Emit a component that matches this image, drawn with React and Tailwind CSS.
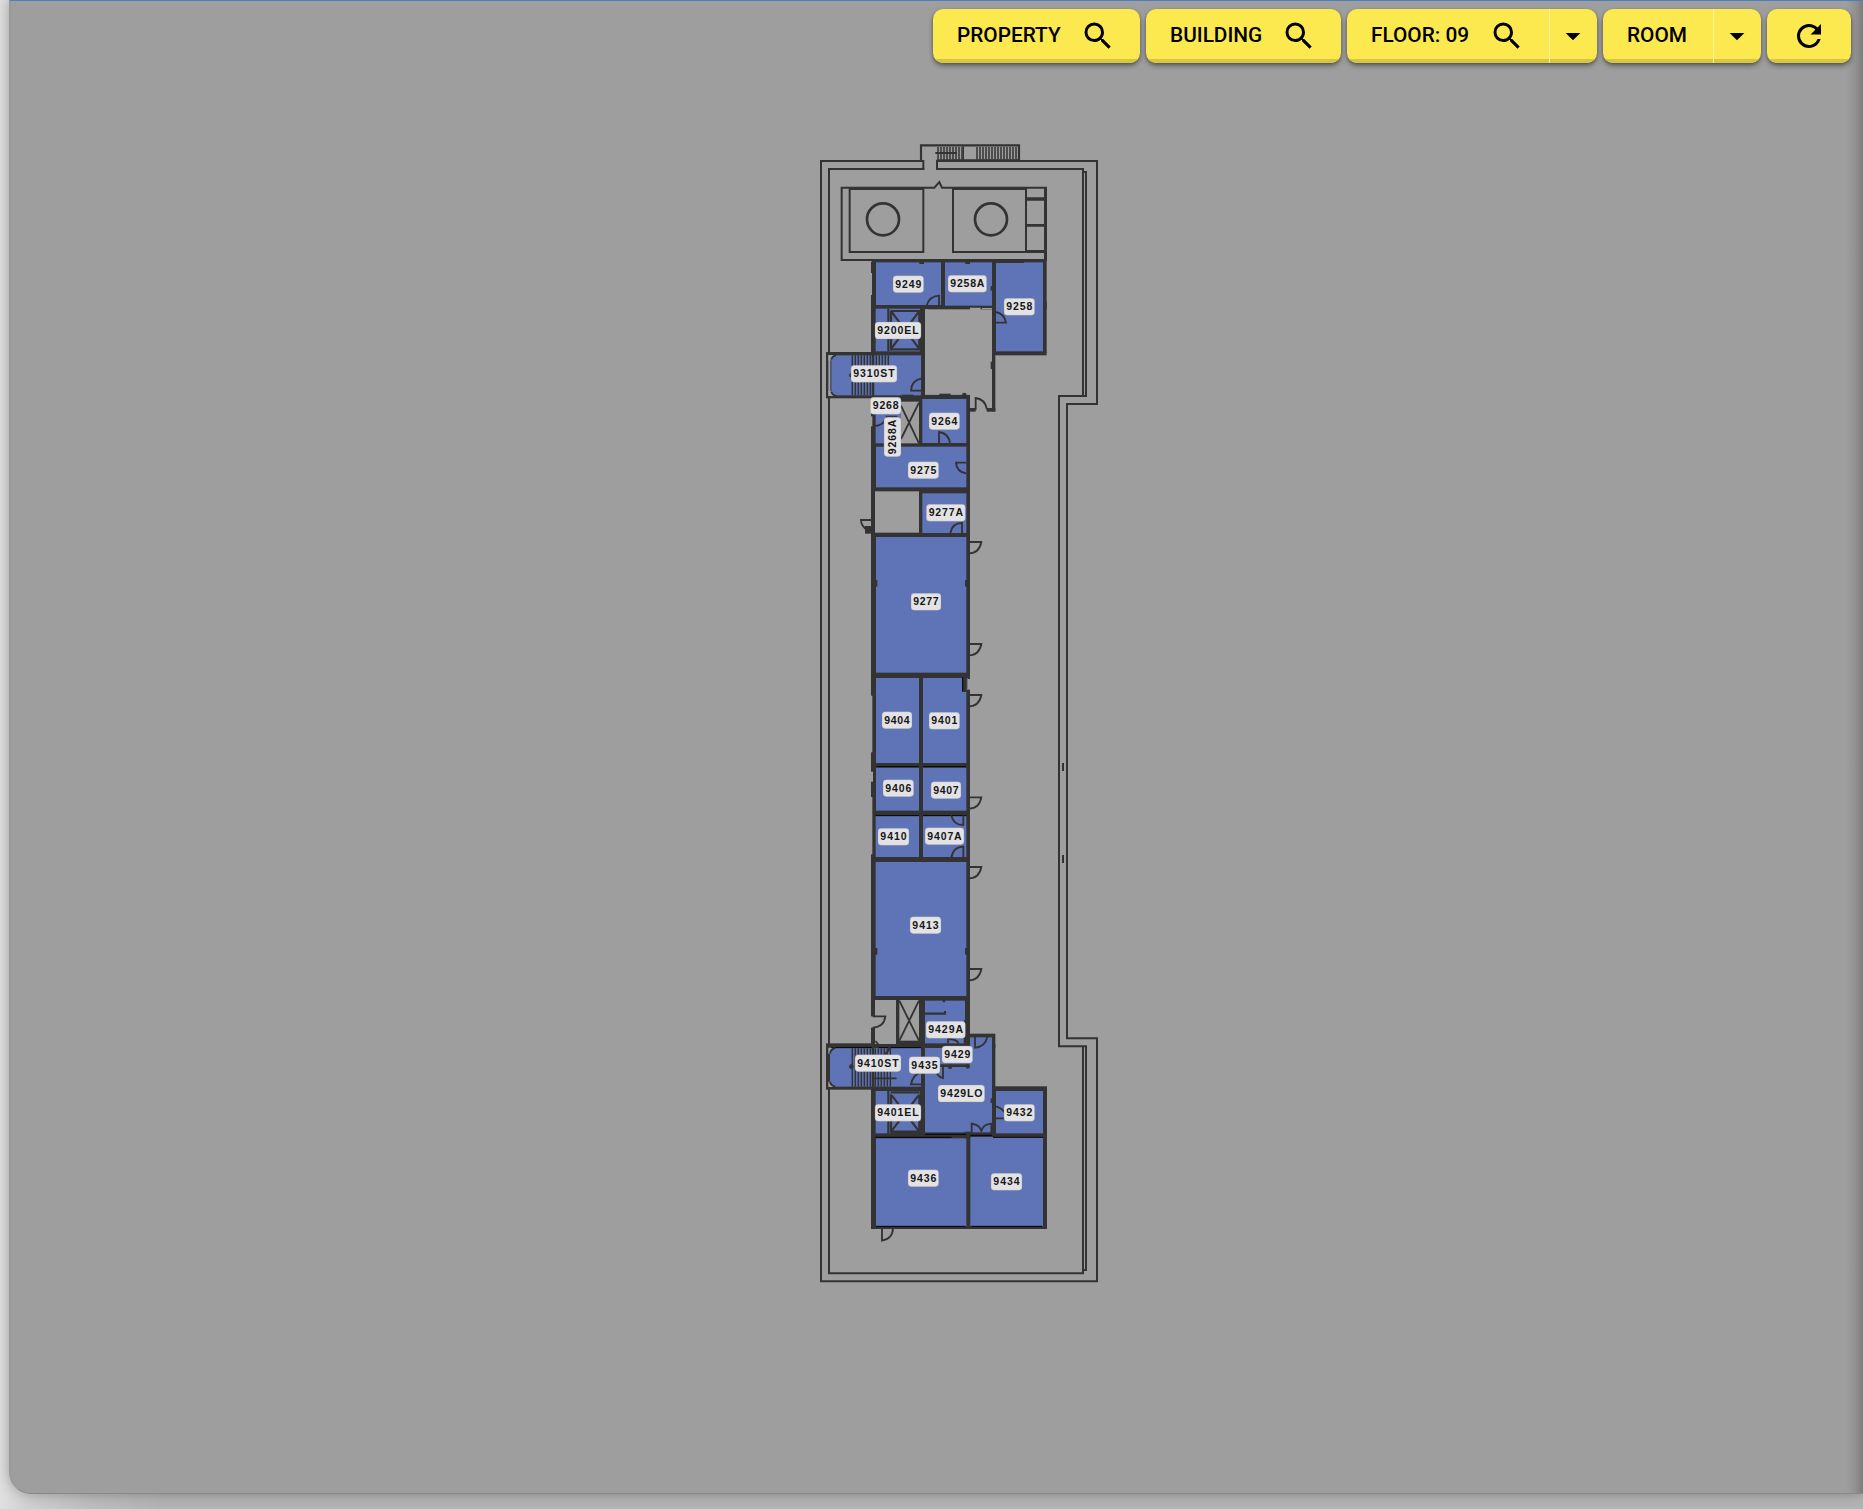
import React from "react";

const INK = "#333333";
const ROOM = "#5f74b6";
const VOID = "#9e9e9e";

const MAGNIFY =
  "M9.5,3A6.5,6.5 0 0,1 16,9.5C16,11.11 15.41,12.59 14.44,13.73L14.71,14H15.5L20.5,19L19,20.5L14,15.5V14.71L13.73,14.44C12.59,15.41 11.11,16 9.5,16A6.5,6.5 0 0,1 3,9.5A6.5,6.5 0 0,1 9.5,3M9.5,5C7,5 5,7 5,9.5C5,12 7,14 9.5,14C12,14 14,12 14,9.5C14,7 12,5 9.5,5Z";
const REFRESH =
  "M17.65,6.35C16.2,4.9 14.21,4 12,4A8,8 0 0,0 4,12A8,8 0 0,0 12,20C15.73,20 18.84,17.45 19.73,14H17.65C16.83,16.33 14.61,18 12,18A6,6 0 0,1 6,12A6,6 0 0,1 12,6C13.66,6 15.14,6.69 16.22,7.78L13,11H20V4L17.65,6.35Z";
const CARET = "M7.1,10L12,14.9L16.9,10H7.1Z";

function Icon({ d }) {
  return (
    <svg viewBox="0 0 24 24" className="size-9 shrink-0 fill-black">
      <path d={d} />
    </svg>
  );
}

// Plan units are thirds of a pixel. Boxes are [x1, y1, x2, y2].
const walls = [
  [186, 375, 710, 523],
  [183, 380, 190, 414],
  [183, 480, 190, 523],
  [546, 500, 556, 829],
  [546, 500, 710, 661],
  [183, 500, 345, 663],
  [48, 651, 342, 790],
  [333, 650, 345, 790],
  [183, 779, 480, 2740],
  [48, 2725, 345, 2864],
  [183, 2727, 556, 3010],
  [470, 2696, 556, 2740],
  [546, 2854, 711, 3010],
  [183, 2856, 711, 3282],
  [480, 819, 497, 830],
  [530, 819, 556, 830],
];

const rooms = [
  [198, 382, 393, 510],
  [405, 382, 546, 512],
  [558, 382, 699, 649],
  [197, 521, 330, 649],
  [64, 661, 333, 781],
  [197, 795, 273, 925],
  [337, 792, 469, 924],
  [198, 935, 469, 1057],
  [337, 1075, 469, 1194],
  [198, 1206, 469, 1613],
  [198, 1629, 327, 1884],
  [339, 1629, 469, 1884],
  [198, 1898, 327, 2027],
  [339, 1898, 469, 2027],
  [197, 2043, 327, 2166],
  [339, 2043, 469, 2166],
  [197, 2181, 469, 2583],
  [345, 2597, 465, 2725],
  [60, 2739, 333, 2855],
  [345, 2739, 546, 2992],
  [480, 2707, 546, 2750],
  [197, 2868, 330, 2995],
  [558, 2868, 699, 2995],
  [198, 3010, 469, 3273],
  [481, 3006, 699, 3273],
];

const voids = [
  [345, 525, 546, 779],
  [273, 800, 327, 925],
  [195, 1069, 327, 1193],
  [195, 2595, 258, 2727],
  [268, 2595, 327, 2717],
];

const labels = [
  ["9249", 249, 422, 92],
  ["9258A", 414, 421, 116],
  ["9258", 582, 490, 92],
  ["9200EL", 195, 561, 138],
  ["9310ST", 123, 691, 138],
  ["9268", 181, 787, 92],
  ["9264", 357, 833, 92],
  ["9275", 294, 980, 92],
  ["9277A", 349, 1108, 117],
  ["9277", 303, 1375, 90],
  ["9404", 216, 1730, 90],
  ["9401", 357, 1732, 92],
  ["9406", 219, 1934, 92],
  ["9407", 363, 1940, 90],
  ["9410", 204, 2080, 93],
  ["9407A", 345, 2078, 117],
  ["9413", 300, 2345, 93],
  ["9429A", 348, 2659, 118],
  ["9429", 396, 2733, 92],
  ["9435", 297, 2765, 93],
  ["9410ST", 135, 2759, 138],
  ["9429LO", 384, 2850, 140],
  ["9401EL", 195, 2908, 138],
  ["9432", 582, 2908, 92],
  ["9436", 294, 3104, 92],
  ["9434", 543, 3115, 93],
];

function Label({ text, x, y, w }) {
  return (
    <g>
      <rect x={x} y={y} width={w} height={51} rx={10} fill="#e3e3e5" stroke="#8d8d93" strokeWidth={1} />
      <text
        x={x + w / 2}
        y={y + 36}
        textAnchor="middle"
        textLength={w - 14}
        fontFamily="'Liberation Sans', Arial, sans-serif"
        fontWeight="700"
        fontSize="31.5"
        fill="#161616"
      >
        {text}
      </text>
    </g>
  );
}

function boxes(list, fill) {
  return list.map(([a, b, c, d]) => (
    <rect key={`${a}-${b}-${c}`} x={a} y={b} width={c - a} height={d - b} fill={fill} />
  ));
}

const treads = (from, to, y1, y2, step = 9) => {
  let d = "";
  for (let x = from; x <= to; x += step) d += `M${x} ${y1}V${y2}`;
  return d;
};

const sideDoors = [1221, 1527, 1680, 1987, 2196, 2502];

function FloorPlan() {
  return (
    <svg viewBox="0 0 900 3465" className="h-[1155px] w-[300px] shrink-0">
      <g fill="none" stroke={INK} strokeWidth={6}>
        <path d="M340 105V78H33V3439H861V2710H771V807H861V78H381V105" />
        <path d="M343 102H57V3415H819V2734M819 783V102H378" />
        <path d="M819 111H828V783H747V2734H828V3405H819" />
        <path d="M333 78V31H627V76" strokeWidth={6.5} />
        <path d="M460 30V75M627 75H380" strokeWidth={4} />
        <path d={treads(384, 462, 36, 74)} strokeWidth={4.5} />
        <path d={treads(501, 622, 36, 74)} strokeWidth={4.5} />
        <path d="M376 54H440" strokeWidth={6} />
        <path d="M95 158H373L388 141L396 158H708V375H95Z" />
        <path d="M119 162H340V351H119ZM708 351H429V162H648V351" />
        <path d="M648 192H708" strokeWidth={10} />
        <path d="M648 271H708" strokeWidth={8} />
        <path d="M648 349H708" strokeWidth={8} />
        <path d="M706 158V375" strokeWidth={8} />
        <circle cx="219" cy="253" r="48" strokeWidth={8} />
        <circle cx="543" cy="253" r="48" strokeWidth={8} />
        <path d="M759 1884V1908M759 2160V2184" />
      </g>

      {boxes(walls, INK)}
      {boxes(voids, VOID)}
      {boxes(rooms, ROOM)}

      {/* openings and uneven wall faces */}
      <g fill={VOID}>
        <rect x="345" y="523" width="10" height="5" />
        <path d="M480 518H512V526H480ZM516 519H546V522H516Z" />
        <rect x="183" y="1682" width="4" height="170" />
        <rect x="183" y="1910" width="6" height="30" />
        <rect x="183" y="1986" width="4" height="172" />
        <rect x="183" y="844" width="4" height="30" />
        <rect x="183" y="2644" width="12" height="34" />
        <rect x="55" y="661" width="6" height="122" />
        <path d="M55 660H74Q64 664 64 676H55ZM55 783H74Q64 779 64 768H55Z" />
        <path d="M55 2738H74Q60 2742 60 2756H55ZM55 2856H74Q60 2852 60 2840H55Z" />
        <rect x="470" y="1630" width="3" height="35" />
        <rect x="474" y="1632" width="6" height="32" />
      </g>
      <g fill={INK}>
        <rect x="328" y="378" width="14" height="9" />
        <rect x="466" y="378" width="14" height="9" />
        <rect x="542" y="453" width="6" height="14" />
        <rect x="542" y="680" width="6" height="22" />
        <rect x="558" y="378" width="84" height="6" />
        <rect x="194" y="1335" width="8" height="20" />
        <rect x="465" y="1335" width="8" height="20" />
        <rect x="194" y="2439" width="8" height="20" />
        <rect x="465" y="2439" width="8" height="20" />
        <rect x="456" y="1627" width="14" height="44" />
        <rect x="461" y="2656" width="6" height="69" />
        <rect x="388" y="776" width="34" height="9" />
        <circle cx="463" cy="780" r="7" />
        <path d="M165 1173H189V1196H165Z" />
        <path d="M275 779H310V791H275Z" />
        <path d="M398 2588H405V2600H398Z" />
        <circle cx="124" cy="721" r="7" />
        <circle cx="124" cy="2795" r="7" />
        <circle cx="420" cy="2795" r="7" />
        <circle cx="473" cy="2794" r="7" />
        <rect x="542" y="2890" width="6" height="14" />
        <rect x="464" y="2990" width="17" height="20" />
      </g>
      <g stroke="#050505" strokeWidth="3" fill="none">
        <path d="M199 1895H327M339 1895H468M196 3007H425M345 2998H468M481 3001H546M549 3007H699M198 3274H466M484 3274H696M64 2738H186M458 1627V1668M206 2738H333M197 2042H327M339 2042H469" />
      </g>

      <g fill="none" stroke={INK} strokeWidth={5.5}>
        {/* doors */}
        <path d="M350 512Q357 484 387 482V514" />
        <path d="M556 531Q583 535 588 563H556" />
        <path d="M333 731Q304 737 303 767H333" />
        <path d="M196 873Q222 870 230 845H262" />
        <path d="M387 924V891Q417 895 420 926" />
        <path d="M469 983H438Q440 1012 469 1015" />
        <path d="M421 1194Q427 1164 456 1164V1194" />
        <path d="M497 825V789Q526 793 531 823" />
        <path d="M193 1155H153Q153 1175 174 1186" />
        {sideDoors.map((y) => (
          <path key={y} d={`M476 ${y}H514Q508 ${y + 33} 477 ${y + 34}`} />
        ))}
        <path d="M424 2041Q430 2070 460 2070V2041M424 2168Q430 2135 460 2135V2168" />
        <path d="M188 2644H226Q222 2676 188 2678" />
        <path d="M196 2718L210 2734M240 2728Q240 2748 222 2760" />
        <path d="M495 2705V2738Q525 2736 532 2706" />
        <path d="M414 2725V2712Q440 2712 446 2725" />
        <path d="M333 2848H303Q308 2819 333 2812" />
        <path d="M390 2792H370Q380 2825 399 2829V2792" />
        <path d="M558 2914Q580 2920 590 2942M558 2950H590" />
        <path d="M485 2995V2966Q512 2970 514 2990Q518 2968 544 2966V2995" />
        <path d="M216 3280V3317Q248 3312 249 3280" />
        {/* lift shafts */}
        <path d="M235 521V649M242 528H331M243 528V643H328V528M246 532L325 638M325 532L246 638" strokeWidth={6.5} />
        <path d="M235 2868V2997M242 2872H329M243 2878V2990H328V2878M246 2882L325 2986M325 2882L246 2986" strokeWidth={6.5} />
        <path d="M242 2993H330" strokeWidth={8} />
        <path d="M273 812L327 925M327 803L273 912" />
        <path d="M268 2597L327 2717M327 2597L268 2717" />
        {/* partition stubs */}
        <path d="M345 2636H405V2628M402 2596V2602" strokeWidth={6.5} />
        <path d="M345 2792H478" strokeWidth={8} />
        <path d="M192 2830H260M258 2725H333" />
        <path d="M64 674Q66 663 78 661M64 770Q66 780 78 783M60 2756Q62 2742 76 2739M60 2840Q62 2852 76 2855" />
      </g>
      <path
        d={treads(127, 190, 661, 781) + treads(199, 243, 661, 700) + treads(127, 190, 2740, 2855) + treads(196, 243, 2740, 2855)}
        fill="none"
        stroke={INK}
        strokeWidth={4.5}
      />
      <path d="M189 655V790M189 2727V2860" stroke={INK} strokeWidth="7" />

      {labels.map(([text, x, y, w]) => (
        <Label key={text} text={text} x={x} y={y} w={w} />
      ))}
      <g transform="translate(222 965) rotate(-90)">
        <Label text="9268A" x={0} y={0} w={118} />
      </g>
    </svg>
  );
}

const shell =
  "flex h-[54px] shrink-0 overflow-hidden rounded-[10px] bg-[#fce94f] text-[20.8px] font-medium leading-none text-black shadow-[0_3px_5px_rgba(0,0,0,0.35),0_1px_3px_rgba(0,0,0,0.25)]";
const lip = "border-b-4 border-[#d6c643]";

function Caret({ label }) {
  return (
    <button aria-label={label} className={`relative flex w-12 items-center justify-center pt-1 ${lip}`}>
      <span className="absolute -bottom-1 left-0 top-0 w-px bg-[#fdf29a]" />
      <Icon d={CARET} />
    </button>
  );
}

function Toolbar() {
  return (
    <nav className="flex justify-end gap-1.5 pr-3 pt-2">
      <div className={`${shell} w-[207px]`}>
        <button className={`flex flex-1 items-center justify-between px-6 pt-1 ${lip}`}>
          <span className="-mt-0.5">PROPERTY</span>
          <Icon d={MAGNIFY} />
        </button>
      </div>
      <div className={`${shell} w-[195px]`}>
        <button className={`flex flex-1 items-center justify-between px-6 pt-1 ${lip}`}>
          <span className="-mt-0.5">BUILDING</span>
          <Icon d={MAGNIFY} />
        </button>
      </div>
      <div className={`${shell} w-[250px]`}>
        <button className={`flex flex-1 items-center justify-between px-6 pt-1 ${lip}`}>
          <span className="-mt-0.5 whitespace-nowrap">FLOOR: 09</span>
          <Icon d={MAGNIFY} />
        </button>
        <Caret label="Floors" />
      </div>
      <div className={`${shell} w-[158px]`}>
        <button className={`flex flex-1 items-center pl-6 pt-1 ${lip}`}>
          <span className="-mt-0.5">ROOM</span>
        </button>
        <Caret label="Rooms" />
      </div>
      <div className={`${shell} w-[84px]`}>
        <button aria-label="Refresh" className={`flex flex-1 items-center justify-center pt-1 ${lip}`}>
          <Icon d={REFRESH} />
        </button>
      </div>
    </nav>
  );
}

export default function App() {
  return (
    <div className="h-[1509px] w-[1863px] overflow-hidden bg-[linear-gradient(to_right,#e0e0e0_0px,#cfcfcf_30px,#bdbdbd_90px,#b4b4b4_160px)] pl-[9px] font-[Roboto,sans-serif]">
      <main className="flex h-[1494px] w-[1854px] flex-col overflow-hidden rounded-bl-[22px] border-b border-l-2 border-t border-b-[#888888] border-l-[#999999] border-t-[#4a80bf] bg-[#9e9e9e] shadow-[0_0_14px_rgba(0,0,0,0.28)]">
        <div className="flex grow flex-col bg-[linear-gradient(to_left,#7c7c7c_0px,#929292_8px,#9e9e9e_17px)]">
          <Toolbar />
          <div className="flex pl-[799px] pt-[72px]">
            <FloorPlan />
          </div>
        </div>
      </main>
    </div>
  );
}
